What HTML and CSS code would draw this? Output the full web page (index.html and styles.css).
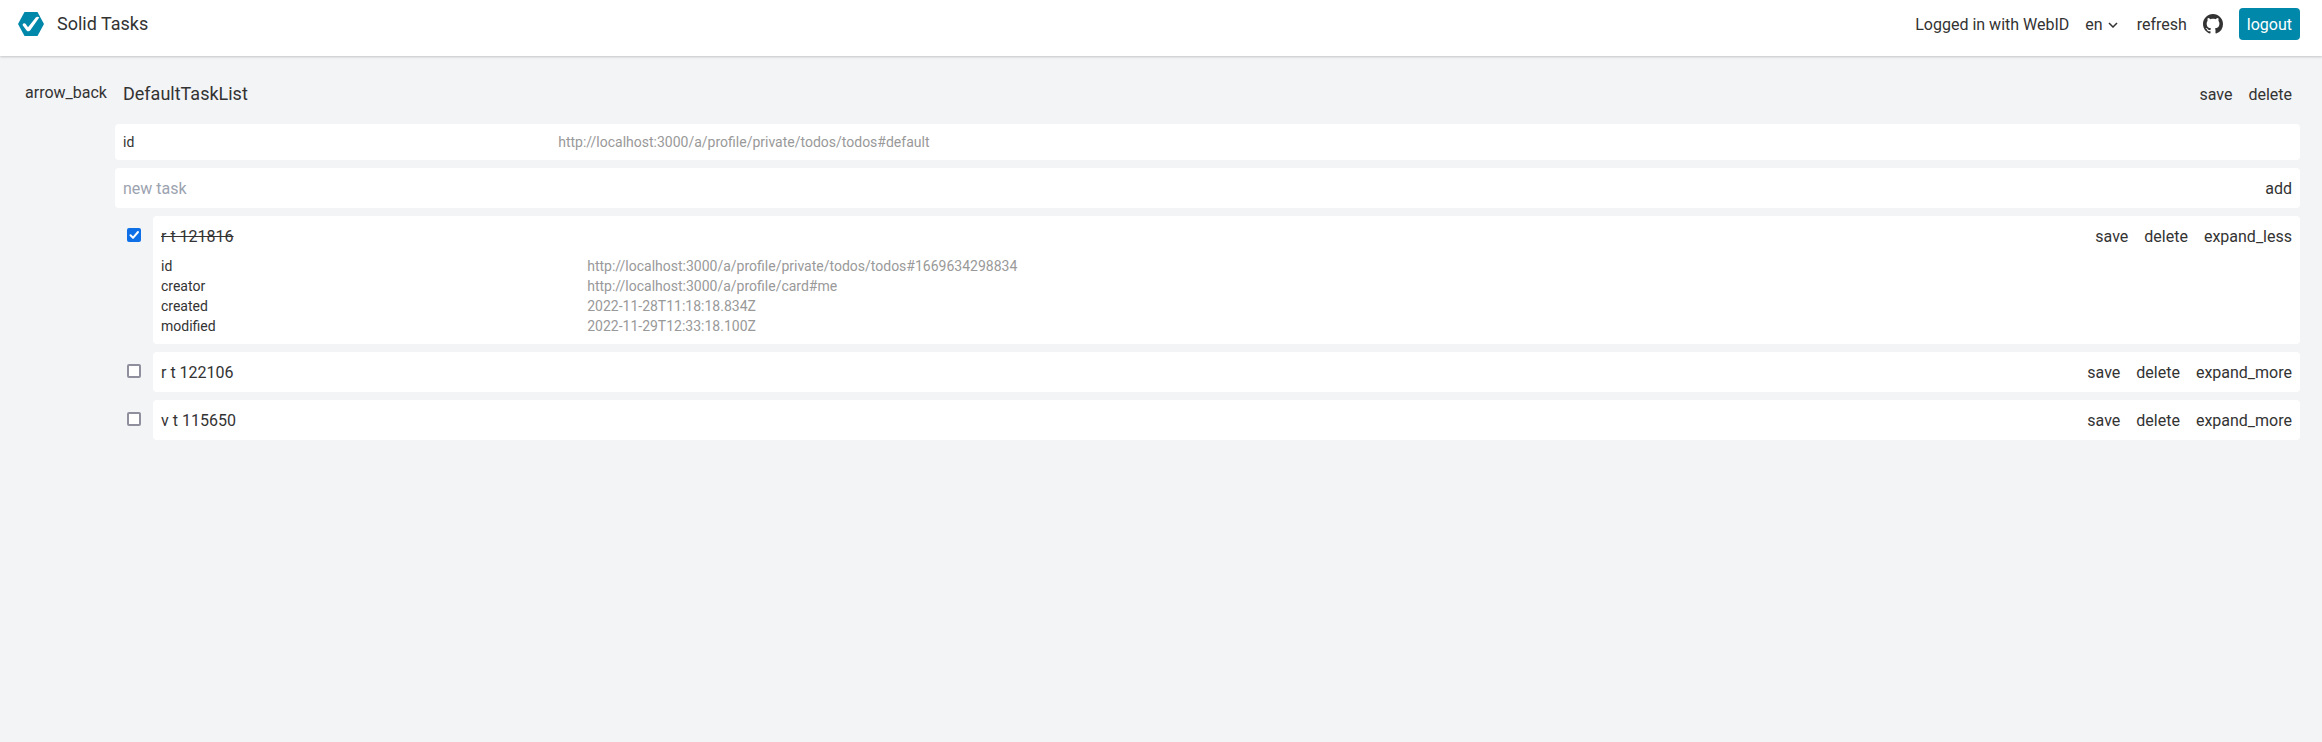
FILE: index.html
```html
<!DOCTYPE html>
<html lang="en">
<head>
<meta charset="utf-8">
<title>Solid Tasks</title>
<link rel="stylesheet" href="styles.css">
</head>
<body>
<header class="topbar">
  <div class="brand">
    <svg class="logo" viewBox="0 0 26 24"><path fill="#0088aa" d="M6.500 0h13L26 12l-6.500 12h-13L0 12z"/><path fill="#fff" d="M4.700 12.200c.5-1.200 2.200-1.500 3-.3l2.300 3.300L18 5.300c1-1 2.500-.7 3.200.2L12.300 18.300c-.9 1.300-2.700 1.400-3.700.1L5 13.800c-.4-.5-.5-1.100-.3-1.600z"/></svg>
    <h1 class="brand-name">Solid Tasks</h1>
  </div>
  <nav class="menu">
    <span>Logged in with WebID</span>
    <span class="lang">en<svg class="chevron" viewBox="0 0 10 6"><path fill="none" stroke="#333" stroke-width="1.500" d="M1 1l4 4 4-4"/></svg></span>
    <span>refresh</span>
    <svg class="github" viewBox="0 0 16 16"><path fill="#333" fill-rule="evenodd" d="M8 0C3.580 0 0 3.580 0 8c0 3.540 2.290 6.530 5.470 7.590.4.070.55-.17.55-.38 0-.19-.01-.82-.01-1.490-2.010.37-2.530-.49-2.690-.94-.09-.23-.48-.94-.82-1.130-.28-.15-.68-.52-.01-.53.63-.01 1.080.58 1.230.82.72 1.210 1.870.87 2.330.66.070-.52.28-.87.51-1.070-1.780-.2-3.640-.89-3.640-3.950 0-.87.31-1.590.82-2.150-.08-.2-.36-1.020.08-2.120 0 0 .67-.21 2.200.82.64-.18 1.320-.27 2-.27s1.360.09 2 .27c1.530-1.040 2.200-.82 2.200-.82.44 1.100.16 1.920.08 2.120.51.56.82 1.270.82 2.150 0 3.070-1.870 3.750-3.650 3.950.29.25.54.73.54 1.480 0 1.070-.01 1.930-.01 2.200 0 .21.15.46.55.38A8.010 8.010 0 0 0 16 8c0-4.420-3.580-8-8-8z"/></svg>
    <button class="logout">logout</button>
  </nav>
</header>
<main class="page">
  <a class="back">arrow_back</a>
  <section class="list">
    <div class="list-head">
      <h2 class="list-title">DefaultTaskList</h2>
      <div class="actions"><span>save</span><span>delete</span></div>
    </div>
    <div class="card details list-details"><span>id</span><span class="value">http://localhost:3000/a/profile/private/todos/todos#default</span></div>
    <div class="card"><div class="row"><span class="placeholder">new task</span><span>add</span></div></div>
    <div class="task">
      <span class="check checked"><svg viewBox="0 0 14 14"><path fill="none" stroke="#fff" stroke-width="2" stroke-linecap="round" stroke-linejoin="round" d="M3.500 7.300l2.500 2.500 5-5.800"/></svg></span>
      <div class="card grow">
        <div class="row"><span class="done">r t 121816</span><div class="actions"><span>save</span><span>delete</span><span>expand_less</span></div></div>
        <div class="details task-details">
          <span>id</span><span class="value">http://localhost:3000/a/profile/private/todos/todos#1669634298834</span>
          <span>creator</span><span class="value">http://localhost:3000/a/profile/card#me</span>
          <span>created</span><span class="value">2022-11-28T11:18:18.834Z</span>
          <span>modified</span><span class="value">2022-11-29T12:33:18.100Z</span>
        </div>
      </div>
    </div>
    <div class="task">
      <span class="check"></span>
      <div class="card grow"><div class="row"><span>r t 122106</span><div class="actions"><span>save</span><span>delete</span><span>expand_more</span></div></div></div>
    </div>
    <div class="task">
      <span class="check"></span>
      <div class="card grow"><div class="row"><span>v t 115650</span><div class="actions"><span>save</span><span>delete</span><span>expand_more</span></div></div></div>
    </div>
  </section>
</main>
</body>
</html>
```
FILE: styles.css
```css
* { box-sizing: border-box; }
body {
  margin: 0;
  min-height: 100vh;
  background: #f3f4f6;
  color: #333;
  font: 16px/26px Roboto, sans-serif;
}
.topbar {
  display: flex;
  justify-content: space-between;
  height: 56px;
  padding: 8px 22px 0 18px;
  background: #fff;
  box-shadow: 0 1px 3px rgba(0, 0, 0, .1), 0 1px 2px rgba(0, 0, 0, .1);
}
.brand { display: flex; align-items: center; gap: 13px; height: 32px; }
.logo { width: 26px; height: 24px; }
.brand-name, .list-title { margin: 0; font-size: 18px; line-height: 28px; font-weight: 400; }
.menu { display: flex; align-items: center; gap: 16px; height: 32px; }
.menu span { padding-top: 2px; }
.lang { display: flex; align-items: center; padding-right: 3px; }
.chevron { width: 10px; height: 6px; margin-left: 5px; }
.github { width: 20px; height: 20px; }
.logout {
  height: 32px;
  padding: 2px 8px 0;
  border: 0;
  border-radius: 4px;
  background: #08a;
  color: #fff;
  font: inherit;
}
.page { display: flex; gap: 8px; padding: 24px 22px 0 25px; }
.back { width: 82px; }
.list { display: flex; flex: 1; flex-direction: column; gap: 8px; }
.list-head { display: flex; justify-content: space-between; height: 36px; padding: 0 8px; }
.list-head .actions { padding-top: 2px; }
.actions { display: flex; gap: 16px; }
.card { padding: 8px; border-radius: 4px; background: #fff; }
.details { display: grid; grid-template-columns: 20% 80%; font-size: 14px; line-height: 20px; }
.list-details { grid-template-columns: calc(20% + 1.4px) 1fr; }
.value { color: #999; }
.row { display: flex; justify-content: space-between; height: 24px; }
.placeholder { color: #9ca3af; }
.task { display: flex; padding-left: 12px; gap: 12px; }
.check {
  width: 14px;
  height: 14px;
  margin-top: 12px;
  border: 2px solid #8f8f9d;
  border-radius: 2px;
  background: #fff;
}
.checked { border: 0; background: #0f6fe6; }
.checked svg { display: block; width: 14px; height: 14px; }
.grow { flex: 1; }
.done { text-decoration: line-through; }
.task-details { padding-top: 8px; }
```
